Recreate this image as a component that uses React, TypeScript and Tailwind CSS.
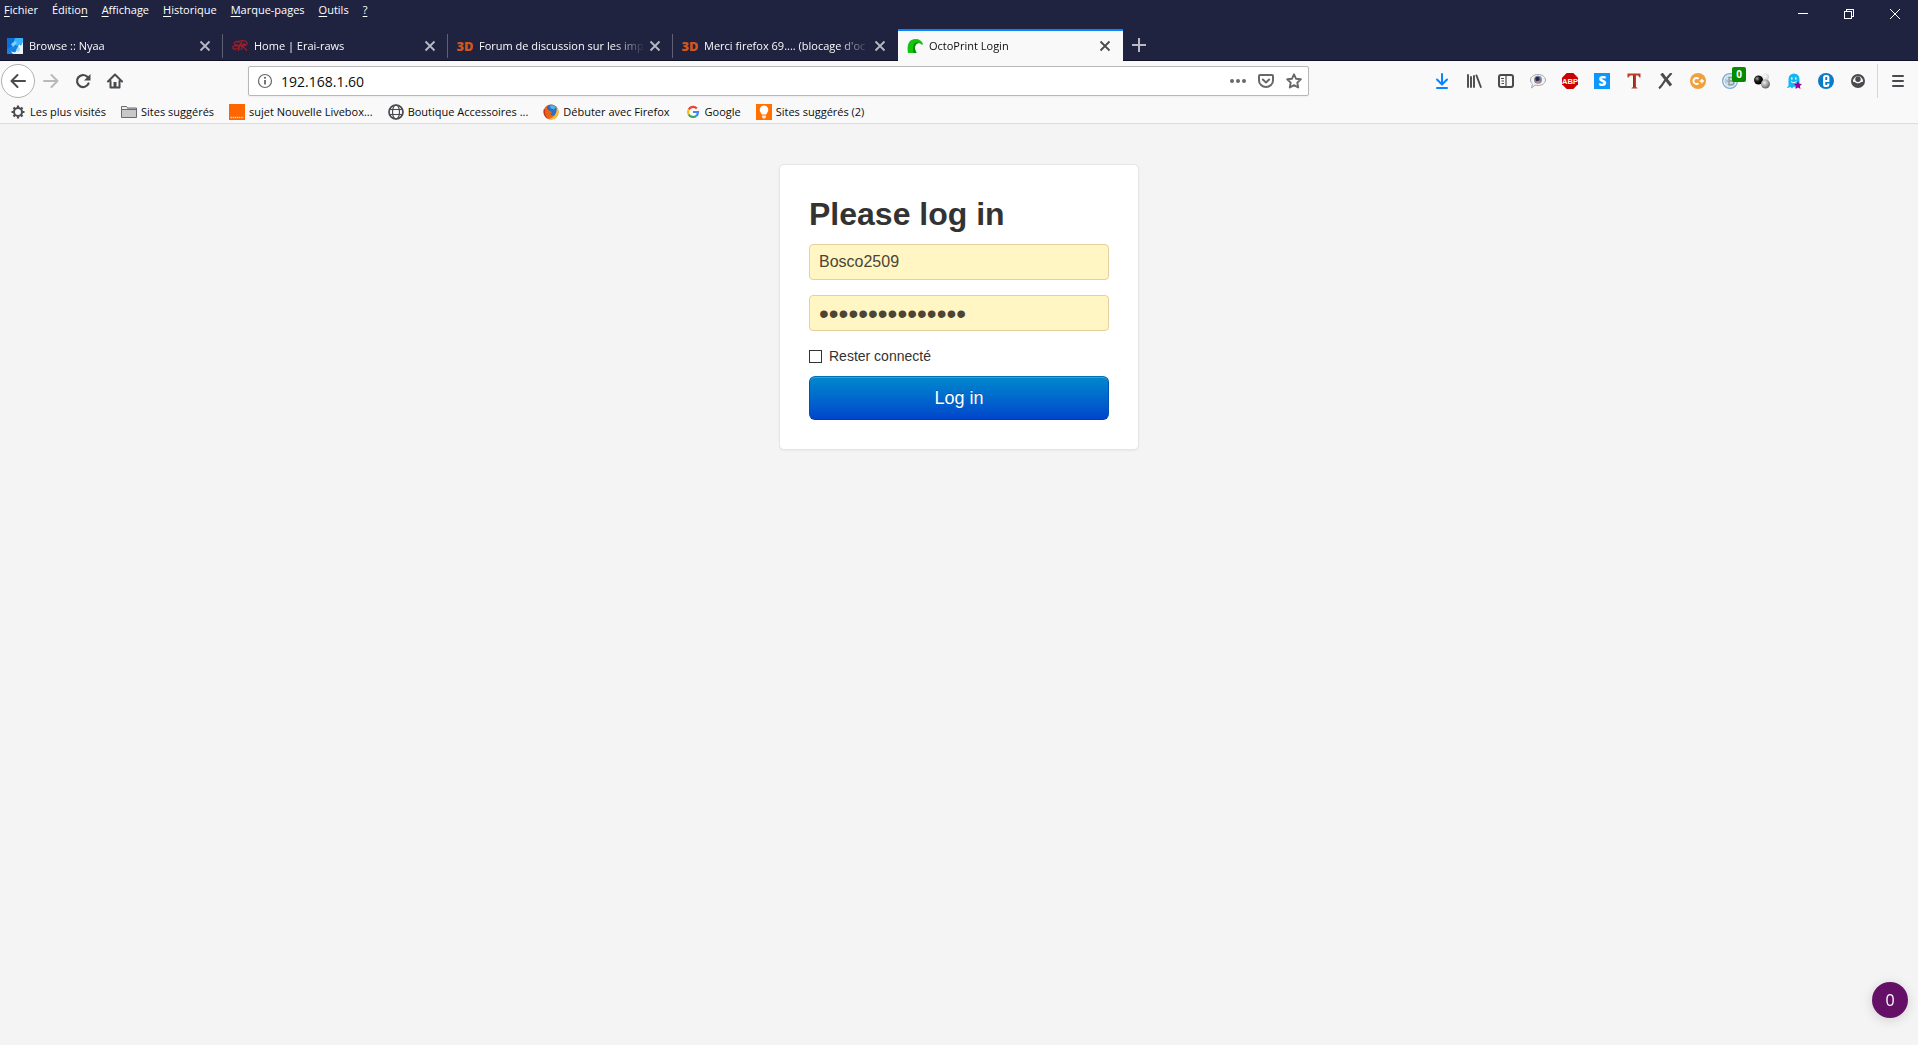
import React from "react";

const stroke = {
  fill: "none",
  stroke: "currentColor",
  strokeWidth: 2,
  strokeLinecap: "round" as const,
  strokeLinejoin: "round" as const,
};

function Svg({ children, className = "size-4" }: any) {
  return (
    <svg viewBox="0 0 16 16" className={`${className} shrink-0`} aria-hidden="true">
      {children}
    </svg>
  );
}

/* Favicons */
const NyaaIcon = () => (
  <Svg>
    <rect width="16" height="16" fill="#1583e6" />
    <path d="M0 0h10L4 9l-4 2z" fill="#0a6fd8" />
    <path d="M8 0h8v5l-5 3-5-2z" fill="#35b4fb" />
    <path d="M4 6l4-3 2 2-4 4z" fill="#7fd0ff" />
    <path d="M16 4v12H6l-2-2.500 4 1 2-3 2-5 2 1z" fill="#e9f6ff" />
    <path d="M9 12l2-3 2 1-1 4z" fill="#9fd6fb" />
  </Svg>
);

const EraiIcon = () => (
  <Svg>
    <g fill="none" stroke="#a01c26" strokeWidth="1.300">
      <path d="M7.500 4.500C5 2.500 1.500 4 2.500 6c.5 1 2 1 3 1C2 7 0 9 1 10.500c1 1.500 4 .5 6-1" />
      <path d="M5 4c4-2 9-2 10 .5S12 8.500 8.500 8c3 0 4 2.500 6.500 4.500" />
      <path d="M10 3.500C8 6 6.500 9 6.500 13M12 5L9 12M3 8l11-1.500" />
    </g>
  </Svg>
);

const ForumIcon = () => (
  <Svg>
    <text x="-0.500" y="13" fontSize="13" fontWeight="800" fontFamily="Open Sans, sans-serif" fill="#d2561b">
      3D
    </text>
  </Svg>
);

const OctoIcon = () => (
  <Svg>
    <path d="M1 15C-.5 7 2 1 8.500 1c4 0 6.500 2 7.500 5l-1 1c-1.500-2-4-2.500-5.500-1C7 8.500 8 12 9.500 15z" fill="#14c40c" />
    <path d="M12 4.500C7 3.500 5 8 6.500 15h3C8 12 7 8.500 9.500 6c1-1 2-1 3-.8z" fill="#0b8a08" />
  </Svg>
);

/* Toolbar icons */
const CloseIcon = ({ className = "size-3" }: any) => (
  <svg viewBox="0 0 12 12" className={className} aria-hidden="true">
    <path d="M1.500 1.500l9 9M10.500 1.500l-9 9" stroke="currentColor" strokeWidth="1.800" />
  </svg>
);

const BackIcon = () => (
  <Svg>
    <path d="M15 8H2M7.500 2L1.500 8l6 6" {...stroke} />
  </Svg>
);

const ForwardIcon = () => (
  <Svg>
    <path d="M1 8h13M8.500 2l6 6-6 6" {...stroke} />
  </Svg>
);

const ReloadIcon = () => (
  <Svg>
    <path d="M13.500 10.500A6 6 0 1 1 12 3.500l1.500 1.500" {...stroke} strokeWidth="2.200" />
    <path d="M15.500 1v6.500H9z" fill="currentColor" />
  </Svg>
);

const HomeIcon = () => (
  <Svg>
    <path d="M1 8.500L8 1.500l7 7M3.500 8v6.500h9V8" {...stroke} />
    <path d="M6.500 9h3v5.500h-3z" fill="currentColor" />
  </Svg>
);

const InfoIcon = () => (
  <Svg>
    <circle cx="8" cy="8" r="6.500" fill="none" stroke="currentColor" strokeWidth="1.200" />
    <path d="M8 7v4.500" stroke="currentColor" strokeWidth="1.800" />
    <circle cx="8" cy="4.800" r="1.100" fill="currentColor" />
  </Svg>
);

const DotsIcon = () => (
  <Svg>
    <circle cx="2" cy="8" r="2" fill="currentColor" />
    <circle cx="8" cy="8" r="2" fill="currentColor" />
    <circle cx="14" cy="8" r="2" fill="currentColor" />
  </Svg>
);

const PocketIcon = () => (
  <Svg>
    <path d="M2 2h12a1 1 0 0 1 1 1v4.500a7 6.500 0 0 1-14 0V3a1 1 0 0 1 1-1z" {...stroke} />
    <path d="M4.800 6.500L8 9.500l3.200-3" {...stroke} />
  </Svg>
);

const StarIcon = () => (
  <Svg>
    <path d="M8 1.300l2 4.400 4.800.6-3.500 3.300.9 4.900L8 12.100l-4.200 2.400.9-4.900L1.200 6.300 6 5.700z" {...stroke} strokeWidth="1.900" />
  </Svg>
);

const DownloadIcon = () => (
  <Svg>
    <path d="M8 1v10M3 6.500L8 11.500l5-5M3 15h10" {...stroke} stroke="#0a84ff" />
  </Svg>
);

const LibraryIcon = () => (
  <Svg>
    <path d="M2 2v12M5 4v10M8 3v11M10.500 2.500L14.800 14" {...stroke} strokeWidth="1.900" />
  </Svg>
);

const SidebarIcon = () => (
  <Svg>
    <rect x="1" y="2" width="14" height="12" rx="2" {...stroke} />
    <path d="M8 3v10" stroke="currentColor" strokeWidth="1.200" />
    <path d="M3 5.500h3M3.500 8H6M3.500 10.500H6" stroke="currentColor" strokeWidth="1" />
  </Svg>
);

const BubbleIcon = () => (
  <Svg>
    <path d="M8 1.500c4.300 0 7.500 2.400 7.500 5.500s-3.200 5.500-7.500 5.500c-1 0-2-.1-2.800-.4L1.500 15l1-4C1.200 10 .5 8.600.5 7 .5 3.900 3.700 1.500 8 1.500z" fill="#f3f3f3" stroke="#a8a8a8" />
    <circle cx="8" cy="6.800" r="4" fill="#7d86a8" />
    <circle cx="7.500" cy="6" r="2.200" fill="#23294c" />
    <path d="M6 9.500l2.500-2 2 2.500H6z" fill="#b98d77" />
  </Svg>
);

const AbpIcon = () => (
  <Svg>
    <path d="M4.700 0h6.600L16 4.700v6.600L11.300 16H4.700L0 11.300V4.700z" fill="#cc0000" />
    <text x="8" y="10.800" textAnchor="middle" fontSize="7.500" fontWeight="700" fontFamily="Liberation Sans, sans-serif" fill="#fff">
      ABP
    </text>
  </Svg>
);

const SIcon = () => (
  <Svg>
    <rect width="16" height="16" fill="#0d96fb" />
    <text x="8.300" y="12.800" textAnchor="middle" fontSize="13.500" fontWeight="800" fontFamily="Open Sans, sans-serif" fill="#fff">
      S
    </text>
  </Svg>
);

const TIcon = () => (
  <Svg>
    <path d="M1.500 .5h13v4h-1L12 2.500h-2V14l1.500 1v.5h-6V15L7 14V2.500H4l-1.500 2h-1z" fill="#c23b28" />
    <path d="M7 2.500h1.500V14H7z" fill="#8f2a1c" />
  </Svg>
);

const XIcon = () => (
  <Svg>
    <path d="M3.500 .5L13 12.500" stroke="currentColor" strokeWidth="3" />
    <path d="M13.500 0L7 7.500C5 10.500 3.500 13.500 1 15.300" fill="none" stroke="currentColor" strokeWidth="2.200" />
  </Svg>
);

const CPlusIcon = () => (
  <Svg>
    <circle cx="8" cy="8" r="8" fill="#f0a03c" />
    <path d="M8.600 5.900A3 3 0 1 0 8.600 10.100" fill="none" stroke="#fff" strokeWidth="1.900" />
    <path d="M9.700 8h4.300M11.850 5.900v4.300" stroke="#fff" strokeWidth="1.500" />
  </Svg>
);

const BIcon = () => (
  <Svg>
    <circle cx="8" cy="8" r="7.400" fill="#eaf3f9" stroke="#74a9d4" strokeWidth="1.200" />
    <circle cx="8" cy="8" r="5.800" fill="#cfdde3" />
    <path d="M7 4.500h2.500a1.700 1.700 0 0 1 0 3.500H7zM7 8h3a1.800 1.800 0 0 1 0 3.700H7z" fill="none" stroke="#8a9ba5" strokeWidth="1.400" />
    <path d="M3 6.500l3 1.500-3 1.500" fill="none" stroke="#a5b8c1" />
  </Svg>
);

const BallsIcon = () => (
  <Svg>
    <defs>
      <radialGradient id="ballDark" cx="35%" cy="35%" r="60%">
        <stop offset="0" stopColor="#aaa" />
        <stop offset="0.450" stopColor="#222" />
        <stop offset="1" stopColor="#000" />
      </radialGradient>
      <radialGradient id="ballGrey" cx="38%" cy="35%" r="65%">
        <stop offset="0" stopColor="#eee" />
        <stop offset="1" stopColor="#666" />
      </radialGradient>
      <radialGradient id="ballLight" cx="40%" cy="40%" r="65%">
        <stop offset="0" stopColor="#fff" />
        <stop offset="1" stopColor="#ccc" />
      </radialGradient>
    </defs>
    <circle cx="11.500" cy="4" r="3.500" fill="url(#ballLight)" />
    <circle cx="4.500" cy="7" r="4.500" fill="url(#ballDark)" />
    <circle cx="11.500" cy="11" r="4.500" fill="url(#ballGrey)" />
  </Svg>
);

const GhostIcon = () => (
  <Svg>
    <path d="M2.500 13V6a5.500 5.500 0 0 1 11 0v8.500l-2-1-1.500 1.500-2-1.500L6 15.500 4.500 14l-3 1c-1 0-.5-1 1-2z" fill="#12b7f5" />
    <path d="M5 5.500h1.500M9 5.500h1.500" stroke="#fff" strokeWidth="2" />
    <path d="M5 8.500c1.500 1.500 4 1.500 5.500 0" fill="none" stroke="#fff" />
    <path d="M12 8l1.200 2.800 2.800.3-2.100 2 .6 2.900-2.500-1.500L9.500 16l.6-2.900-2.100-2 2.800-.3z" fill="#930094" />
  </Svg>
);

const EIcon = () => (
  <Svg>
    <circle cx="8" cy="8" r="8" fill="#0a7bc9" />
    <path d="M10.300 10.500v1.300a1.200 1.200 0 0 1-1.200 1.200H7.700a1.500 1.500 0 0 1-1.500-1.500v-7A1.500 1.500 0 0 1 7.700 3h1.100a1.500 1.500 0 0 1 1.500 1.500V8H6.500" fill="none" stroke="#fff" strokeWidth="2.200" />
  </Svg>
);

const AccountIcon = () => (
  <Svg>
    <circle cx="8" cy="8" r="7" fill="currentColor" />
    <path d="M4 5.500C2.800 7 2.800 8 3.300 9h1.500c1.200 1.800 5.200 1.800 6.400 0h1.500c.5-1 .5-2-.7-3.500C11 4 9.800 3.200 8 3.200S5 4 4 5.500z" fill="#f9f9fa" />
    <circle cx="8" cy="6.200" r="2.700" fill="currentColor" />
  </Svg>
);

const MenuIcon = () => (
  <Svg>
    <path d="M3 3h10M3 8h10M3 13h10" {...stroke} />
  </Svg>
);

/* Bookmark icons */
const GearIcon = () => (
  <Svg>
    <circle cx="8" cy="8" r="4" {...stroke} />
    <path
      d="M8 1.500v2M8 12.500v2M1.500 8h2M12.500 8h2M3.500 3.500L5 5M11 11l1.500 1.500M12.500 3.500L11 5M5 11l-1.500 1.500"
      {...stroke}
      strokeLinecap="butt"
      strokeWidth="2.200"
    />
  </Svg>
);

const FolderIcon = () => (
  <Svg>
    <path d="M.5 13.500v-11h5l1 1.500h9v9.500z" fill="#c8c8ca" stroke="#6a6a6c" />
    <path d="M.5 5.500h15" stroke="#6a6a6c" />
    <path d="M1 3h4.300l.9 2H1z" fill="#ededed" />
  </Svg>
);

const OrangeIcon = () => (
  <Svg>
    <rect width="16" height="16" fill="#ff6600" />
    <path d="M1.500 13.500h13" stroke="#ffc9a3" strokeWidth="1.500" strokeDasharray="1.500 .6" />
  </Svg>
);

const GlobeIcon = () => (
  <Svg>
    <g fill="none" stroke="currentColor" strokeWidth="1.200">
      <circle cx="8" cy="8" r="7" strokeWidth="1.700" />
      <ellipse cx="8" cy="8" rx="3.500" ry="7" />
      <path d="M1.500 5.500h13M1.500 10.500h13" />
    </g>
  </Svg>
);

const FirefoxIcon = () => (
  <Svg>
    <circle cx="8" cy="8" r="7.600" fill="#e8641b" />
    <path d="M4 2.500C6 .3 10 0 13 2.500c2 2 2 5 .5 7.500-1.500 2-4.500 2-6 0L9 8 6 6.500 4 5z" fill="#2a6fc0" />
    <path d="M6.500 2c2-1.500 5-1 6.500 1l-2 2.500-3-1z" fill="#4fb4e6" />
    <path d="M13.500 2.500c3 3.500 2.500 9-1.500 11.700-2 1.300-4.500 1.500-6.500.8 5.500-1 9-5.500 8-12.500z" fill="#fbc02d" />
    <path d="M.8 5C0 9 1.500 13 5 15 2.500 12 1.500 9 2 5.500z" fill="#c2341a" />
  </Svg>
);

const GoogleIcon = () => (
  <Svg>
    <g fill="none" strokeWidth="2.200">
      <path d="M11.800 4.400A5 5 0 0 0 3.700 5.500" stroke="#ea4335" />
      <path d="M3.700 5.500a5 5 0 0 0 0 5" stroke="#fbbc05" />
      <path d="M3.700 10.500a5 5 0 0 0 7.600 1.300" stroke="#34a853" />
      <path d="M11.300 11.800A5 5 0 0 0 13 8H8" stroke="#4285f4" />
    </g>
  </Svg>
);

const BulbIcon = () => (
  <Svg>
    <rect width="16" height="16" fill="#ff7200" />
    <path d="M8 1.500a4.300 4.300 0 0 1 4.300 4.300c0 2-1.300 2.700-2 4.700H5.700c-.7-2-2-2.700-2-4.700A4.300 4.300 0 0 1 8 1.500z" fill="#fff" />
    <path d="M6 11.500h4V13l-1 1.500H7L6 13z" fill="#ffe3cc" />
  </Svg>
);

const menus = [
  ["", "F", "ichier"],
  ["Éditio", "n", ""],
  ["", "A", "ffichage"],
  ["", "H", "istorique"],
  ["", "M", "arque-pages"],
  ["", "O", "utils"],
  ["", "?", ""],
];

const tabs = [
  { title: "Browse :: Nyaa", icon: <NyaaIcon /> },
  { title: "Home | Erai-raws", icon: <EraiIcon /> },
  { title: "Forum de discussion sur les imp", icon: <ForumIcon /> },
  { title: "Merci firefox 69.... (blocage d'oc", icon: <ForumIcon /> },
  { title: "OctoPrint Login", icon: <OctoIcon />, active: true },
];

const bookmarks = [
  { title: "Les plus visités", icon: <GearIcon /> },
  { title: "Sites suggérés", icon: <FolderIcon /> },
  { title: "sujet Nouvelle Livebox...", icon: <OrangeIcon /> },
  { title: "Boutique Accessoires ...", icon: <GlobeIcon /> },
  { title: "Débuter avec Firefox", icon: <FirefoxIcon /> },
  { title: "Google", icon: <GoogleIcon /> },
  { title: "Sites suggérés (2)", icon: <BulbIcon /> },
];

const tools = [
  { label: "Téléchargements", icon: <DownloadIcon /> },
  { label: "Bibliothèque", icon: <LibraryIcon /> },
  { label: "Panneau latéral", icon: <SidebarIcon /> },
  { label: "Bulle", icon: <BubbleIcon /> },
  { label: "Adblock Plus", icon: <AbpIcon /> },
  { label: "Stylish", icon: <SIcon /> },
  { label: "Texte", icon: <TIcon /> },
  { label: "X", icon: <XIcon /> },
  { label: "C+", icon: <CPlusIcon /> },
  { label: "Bloqueur", icon: <BIcon />, badge: "0" },
  { label: "Billes", icon: <BallsIcon /> },
  { label: "Ghostery", icon: <GhostIcon /> },
  { label: "E", icon: <EIcon /> },
  { label: "Compte", icon: <AccountIcon /> },
];

function TitleBar() {
  return (
    <div className="flex h-[29px] items-start justify-between text-white">
      <nav className="flex gap-3.5 pl-1 text-[11px] leading-5">
        {menus.map(([before, key, after]) => (
          <button key={before + key + after}>
            {before}
            <span className="underline underline-offset-2">{key}</span>
            {after}
          </button>
        ))}
      </nav>
      <div className="flex">
        <button aria-label="Réduire" className="flex h-7 w-[46px] items-center justify-center">
          <svg viewBox="0 0 10 10" className="size-2.5" shapeRendering="crispEdges">
            <path d="M0 4.500h10" stroke="currentColor" />
          </svg>
        </button>
        <button aria-label="Restaurer" className="flex h-7 w-[46px] items-center justify-center">
          <svg viewBox="0 0 10 10" className="size-2.5" shapeRendering="crispEdges">
            <path d="M.5 2.500h7v7h-7zM2.500 2.500v-2h7v7h-2" fill="none" stroke="currentColor" />
          </svg>
        </button>
        <button aria-label="Fermer" className="flex h-7 w-[46px] items-center justify-center">
          <svg viewBox="0 0 10 10" className="size-2.5">
            <path d="M0 0l10 10M10 0L0 10" stroke="currentColor" />
          </svg>
        </button>
      </div>
    </div>
  );
}

function Tab({ title, icon, active, first, last }: any) {
  return (
    <div
      className={`flex h-8 items-center border-t-2 pr-3 ${first ? "w-[223px] pl-[7px]" : "w-[225px] pl-[9px]"} ${
        active
          ? "border-[#0a84ff] bg-[#f9f9fa] text-[#0c0c0d]"
          : "border-b border-t-transparent border-b-[#0f1126] text-[#f9f9fa]"
      }`}
    >
      {icon}
      <button
        role="tab"
        aria-selected={!!active}
        className="ml-1.5 min-w-0 flex-1 overflow-hidden text-left text-[11px] leading-5 whitespace-nowrap [mask-image:linear-gradient(to_right,black_calc(100%-32px),transparent)]"
      >
        {title}
      </button>
      <button aria-label="Fermer l'onglet" className={`ml-1 ${active ? "text-[#4a4a4f]" : "text-[#b9b9c3]"}`}>
        <CloseIcon />
      </button>
      {!active && !last && <span className="-mr-3 ml-[11px] h-6 w-px bg-[#5d5f75]" />}
    </div>
  );
}

function TabStrip() {
  return (
    <div className="flex" role="tablist">
      {tabs.map((tab, i) => (
        <Tab key={tab.title} {...tab} first={i === 0} last={i === 3} />
      ))}
      <div className="flex h-8 flex-1 items-center border-b border-[#0f1126] pl-[9px] text-[#b9b9c3]">
        <button aria-label="Nouvel onglet">
          <svg viewBox="0 0 14 14" className="size-3.5">
            <path d="M7 0v14M0 7h14" stroke="currentColor" strokeWidth="2" />
          </svg>
        </button>
      </div>
    </div>
  );
}

function NavBar() {
  return (
    <div className="flex h-10 items-center text-[#4a4a4f]">
      {/* Left */}
      <button
        aria-label="Reculer"
        className="ml-px flex size-[34px] shrink-0 items-center justify-center rounded-full border border-[#b1b1b3] bg-white"
      >
        <BackIcon />
      </button>
      <button aria-label="Avancer" className="flex w-8 justify-center text-[#b9b9bb]">
        <ForwardIcon />
      </button>
      <button aria-label="Actualiser" className="flex w-8 justify-center">
        <ReloadIcon />
      </button>
      <button aria-label="Accueil" className="flex w-8 justify-center">
        <HomeIcon />
      </button>
      {/* Address */}
      <div className="mx-[117px] flex h-[30px] min-w-0 flex-1 items-center rounded-xs border border-[#b8b8ba] bg-white pr-1.5 pl-2 text-[#68686c] shadow-xs">
        <InfoIcon />
        <input
          aria-label="Adresse"
          defaultValue="192.168.1.60"
          className="ml-2 min-w-0 flex-1 bg-transparent pt-0.5 text-sm text-[#0c0c0d] outline-none"
        />
        <div className="flex gap-3">
          <button aria-label="Actions">
            <DotsIcon />
          </button>
          <button aria-label="Pocket">
            <PocketIcon />
          </button>
          <button aria-label="Marquer cette page">
            <StarIcon />
          </button>
        </div>
      </div>
      {/* Right */}
      {tools.map((tool) => (
        <button key={tool.label} aria-label={tool.label} className="relative flex w-8 shrink-0 justify-center">
          {tool.icon}
          {tool.badge && (
            <span className="absolute -top-1.5 left-[18px] h-[15px] w-3.5 rounded-xs bg-[#058b00] text-center text-[10px] leading-[15px] font-bold text-white">
              {tool.badge}
            </span>
          )}
        </button>
      ))}
      <button
        aria-label="Menu"
        className="ml-[3px] flex h-[34px] w-[41px] shrink-0 items-center justify-center border-l border-[#d7d7db]"
      >
        <MenuIcon />
      </button>
    </div>
  );
}

function BookmarksBar() {
  return (
    <div className="flex h-[23px] items-center gap-[15px] border-b border-[#dcdcdc] pl-2.5 text-[#4a4a4f]">
      {bookmarks.map((bookmark) => (
        <a key={bookmark.title} href="#" className="flex items-center gap-1">
          {bookmark.icon}
          <span className="text-[11px] leading-5 whitespace-nowrap text-[#0c0c0d]">{bookmark.title}</span>
        </a>
      ))}
    </div>
  );
}

function LoginForm() {
  const field =
    "mb-[15px] block h-9 w-full rounded-sm border border-[#e6cf9c] bg-[#fff6c4] px-[9px] text-[#4c4434] outline-none";
  return (
    <form
      className="mx-auto w-[360px] rounded-[5px] border border-[#e5e5e5] bg-white p-[29px] shadow-[0_1px_2px_rgba(0,0,0,0.05)]"
      onSubmit={(e) => e.preventDefault()}
    >
      <h2 className="mb-2.5 text-[32px] leading-10 font-bold text-[#333]">Please log in</h2>
      <input type="text" aria-label="Username" defaultValue="Bosco2509" className={`${field} text-base`} />
      <input
        type="password"
        aria-label="Password"
        defaultValue="octoprint-login"
        className={`${field} pt-0.5 text-[28px] leading-8`}
      />
      <label className="mb-2.5 flex items-center text-sm leading-5 text-[#333]">
        <input type="checkbox" className="mr-[7px] size-[13px] appearance-none border border-[#333] bg-white" />
        Rester connecté
      </label>
      <button
        type="submit"
        className="block h-11 w-full rounded-md border border-x-[#0055b3] border-t-[#0072b5] border-b-[#003ea8] bg-linear-to-b from-[#0088cc] to-[#0044cc] text-lg text-white shadow-[inset_0_1px_0_rgba(255,255,255,0.2)] [text-shadow:0_-1px_0_rgba(0,0,0,0.25)]"
      >
        Log in
      </button>
    </form>
  );
}

export default function App() {
  return (
    <div className="min-h-screen bg-[#f4f4f4] font-['Liberation_Sans',Arial,sans-serif]">
      <header className="font-['Open_Sans','Noto_Sans',sans-serif]">
        <div className="bg-[#202340]">
          <TitleBar />
          <TabStrip />
        </div>
        <div className="bg-[#f9f9fa]">
          <NavBar />
          <BookmarksBar />
        </div>
      </header>
      <main className="pt-10">
        <LoginForm />
      </main>
      {/* Floating counter */}
      <button className="fixed right-2.5 bottom-[27px] size-9 rounded-full bg-[#651067] text-base text-white shadow-[0_2px_12px_rgba(0,0,0,0.15)] font-['Open_Sans',sans-serif]">
        0
      </button>
    </div>
  );
}
